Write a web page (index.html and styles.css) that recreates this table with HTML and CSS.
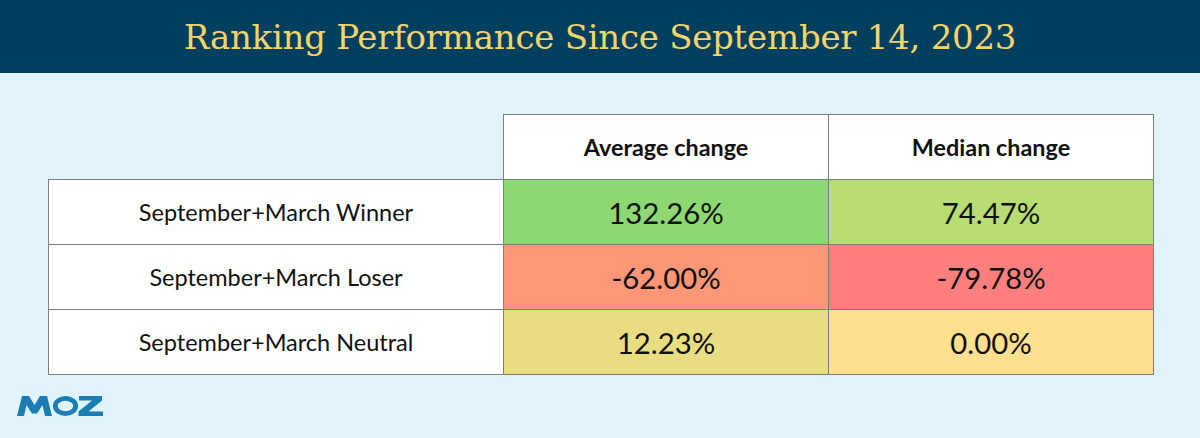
FILE: index.html
```html
<!DOCTYPE html>
<html lang="en">
<head>
<meta charset="utf-8">
<title>Ranking Performance Since September 14, 2023</title>
<link rel="stylesheet" href="styles.css">
</head>
<body>
<header class="banner">
  <h1 class="title">Ranking Performance Since September 14, 2023</h1>
</header>
<main class="content">
  <table class="perf">
    <colgroup>
      <col class="c-label"><col class="c-val"><col class="c-val">
    </colgroup>
    <thead>
      <tr>
        <th class="empty"></th>
        <th>Average change</th>
        <th>Median change</th>
      </tr>
    </thead>
    <tbody>
      <tr>
        <td class="label">September+March Winner</td>
        <td class="num green">132.26%</td>
        <td class="num lime">74.47%</td>
      </tr>
      <tr>
        <td class="label">September+March Loser</td>
        <td class="num salmon">-62.00%</td>
        <td class="num red">-79.78%</td>
      </tr>
      <tr>
        <td class="label">September+March Neutral</td>
        <td class="num khaki">12.23%</td>
        <td class="num sand">0.00%</td>
      </tr>
    </tbody>
  </table>
  <div class="logo" aria-label="MOZ">
    <svg width="86" height="20" viewBox="0 0 86 20" xmlns="http://www.w3.org/2000/svg">
      <polygon fill="#1a7db4" points="0,20 5,0 12,0 17.5,9 23,0 30,0 35,20 28,20 25.5,9 20,17.5 15,17.5 9.5,9 7,20"/>
      <ellipse cx="48.5" cy="10" rx="10.2" ry="7.6" fill="none" stroke="#1a7db4" stroke-width="4.8"/>
      <polygon fill="#1a7db4" points="62,0 85,0 85,4.5 71.5,15.5 86,15.5 86,20 61.5,20 61.5,15.5 75,4.5 62,4.5"/>
    </svg>
  </div>
</main>
</body>
</html>
```

FILE: styles.css
```css
* { box-sizing: border-box; }

html, body {
  margin: 0;
  padding: 0;
}

body {
  background: #e0f3f8;
  width: 1200px;
  height: 438px;
  overflow: hidden;
  font-family: Lato, "Open Sans", "Liberation Sans", sans-serif;
  color: #111;
}

.banner {
  height: 73px;
  background: #003f5d;
  display: flex;
  align-items: center;
  justify-content: center;
}

.title {
  margin: 0;
  font-family: "DejaVu Serif", "Liberation Serif", serif;
  font-weight: 400;
  font-size: 34px;
  letter-spacing: -0.25px;
  color: #f6d46b;
  padding-top: 1px;
}

.content {
  padding: 41px 0 0 48px;
}

.perf {
  border-collapse: collapse;
  table-layout: fixed;
  width: 1105px;
}

.c-label { width: 455px; }
.c-val { width: 325px; }

.perf th,
.perf td {
  border: 1px solid #7d7d7d;
  height: 65px;
  padding: 0;
  text-align: center;
  vertical-align: middle;
}

.perf th {
  background: #fff;
  font-weight: 700;
  font-size: 23.4px;
  color: #111;
}

.perf th.empty {
  background: transparent;
  border: none;
}

.label {
  background: #fff;
  font-size: 23.5px;
}

.num {
  font-size: 29.3px;
}

.green { background: #8dd873; }
.lime { background: #b8dd73; }
.salmon { background: #fe9677; }
.red { background: #fe7f7b; }
.khaki { background: #e9dd82; }
.sand { background: #fee08f; }

.logo {
  margin: 21px 0 0 -31px;
  height: 20px;
  line-height: 0;
}
```
